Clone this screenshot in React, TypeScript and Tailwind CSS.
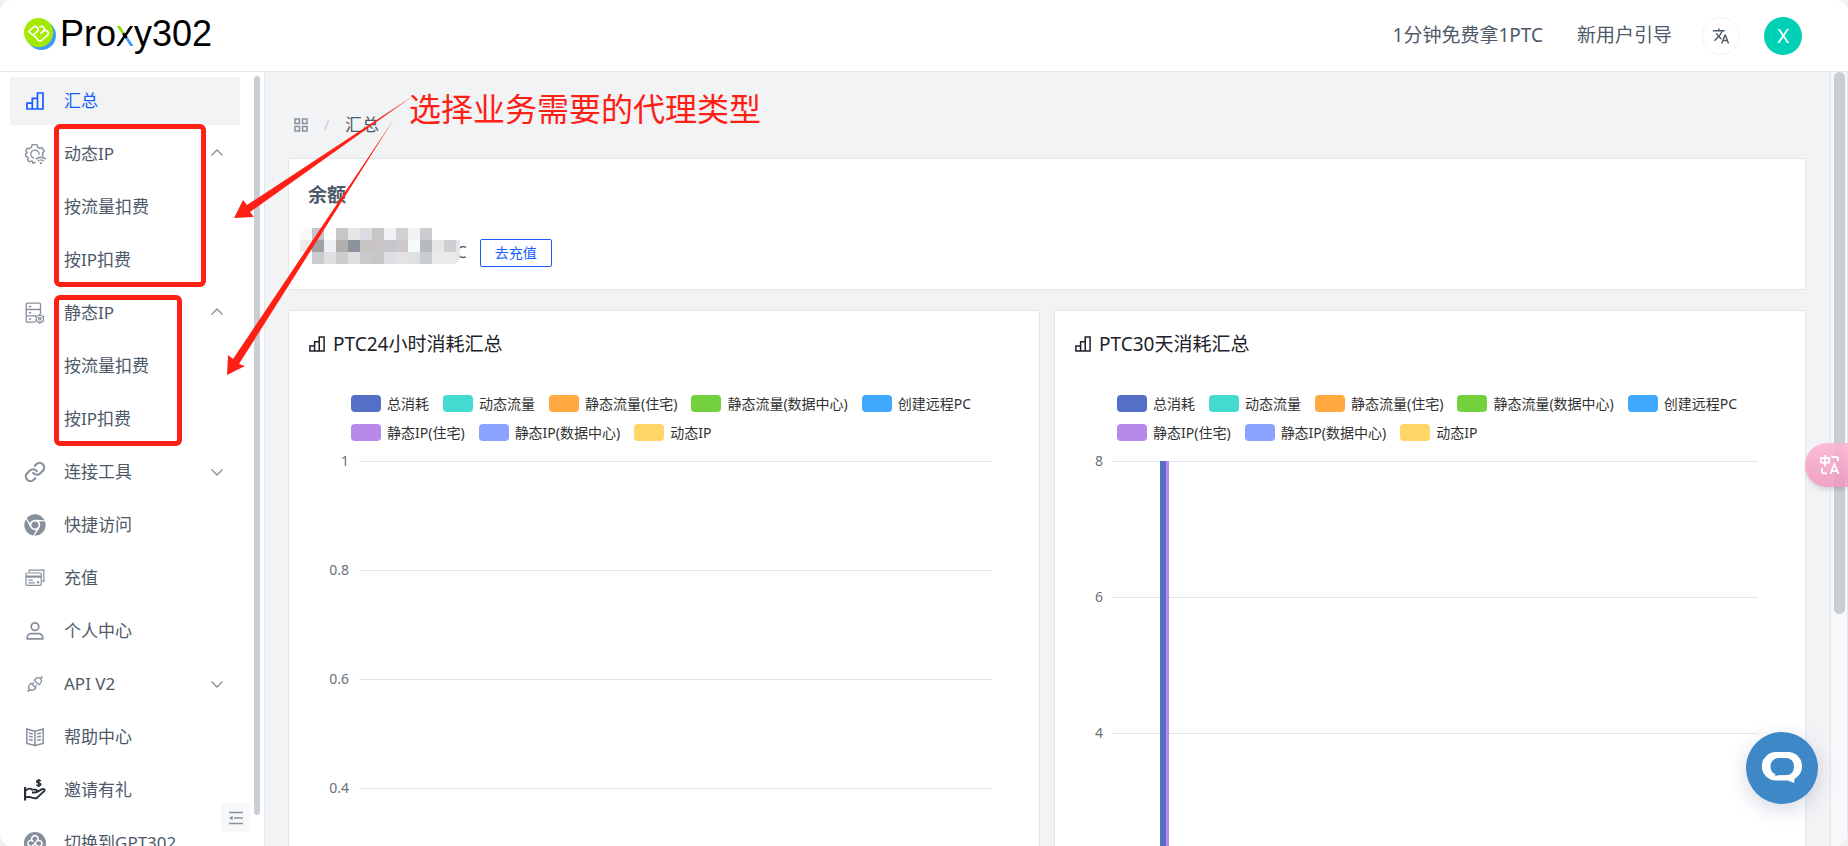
import React from "react";
import { AiOutlineApi } from "react-icons/ai";
import { FaChrome } from "react-icons/fa";
import { FiLink } from "react-icons/fi";
import { MdTranslate } from "react-icons/md";

interface IconProps {
  className?: string;
}

interface SubItem {
  label: string;
}

interface NavItem {
  label: string;
  icon: React.ReactNode;
  active?: boolean;
  expand?: "open" | "closed";
  items?: SubItem[];
}

interface Bar {
  key: string;
  className: string;
}

interface ChartCardProps {
  title: string;
  ticks: string[];
  rowClass: string;
  plotClass: string;
  bars?: Bar[];
}

const BarsIcon = ({ className }: IconProps) => (
  <svg className={className} viewBox="0 0 18 18" fill="none" stroke="currentColor" strokeWidth="1.7">
    <path d="M1 17V11.2h5.3V17M6.3 17V6.4h5.2M11.5 17V1H17v16M0.2 17h17.6" />
  </svg>
);

const GearWifiIcon = ({ className }: IconProps) => (
  <svg className={className} viewBox="0 0 22 22" fill="none" stroke="currentColor" strokeWidth="1.4">
    <path d="M11.5 19.2 9.2 20.4 7.9 17.9 5.4 18.8 3.6 16.9 4.2 14.3 1.6 13.2V10.9L3.2 9.6 1.8 7.7 3.2 5.2 5.6 5.5 7.6 4.2 8.2 1.6H13L13.7 4.2 15.7 5.4 18.2 4.8 20.2 8.2 18.5 10.2V12.4L19.6 13.2" strokeLinejoin="round" />
    <path d="M10 15.2A4.1 4.1 0 1 1 15 11.6" />
    <path d="M12 16.2a7 7 0 0 1 9.6 0M13.8 18.2a4.5 4.5 0 0 1 6 0" />
    <circle cx="16.8" cy="20.2" r="1.1" fill="currentColor" stroke="none" />
  </svg>
);

const ServerIcon = ({ className }: IconProps) => (
  <svg className={className} viewBox="0 0 22 22" fill="none" stroke="currentColor" strokeWidth="1.3">
    <path d="M16.5 12V2.2a1 1 0 0 0-1-1H3.2a1 1 0 0 0-1 1v17a1 1 0 0 0 1 1h8.3M2.2 7.5h14.3M2.2 13.8h9.8" />
    <path d="M4.8 4.5h2.4M4.8 10.7h2.4M4.8 17h2.4" strokeWidth="1.6" />
    <circle cx="15.8" cy="16.8" r="3.7" />
    <circle cx="15.8" cy="16.8" r="1.3" />
    <path d="M15.8 13.1v-1.3M15.8 21.7v-1.2M12.4 14.9l-1-.6M20.2 19.3l-1-.6M19.2 14.9l1-.6M11.4 19.3l1-.6" />
  </svg>
);

const CardsIcon = ({ className }: IconProps) => (
  <svg className={className} viewBox="0 0 22 22" fill="none" stroke="currentColor" strokeWidth="1.2">
    <path d="M5.2 5V3.2h14.6v11.2h-1.6" />
    <rect x="2" y="6" width="15.2" height="12.4" rx="1" />
    <path d="M2 9.6h15.2" strokeWidth="2.2" />
    <path d="M4.4 13.2h4.4M4.4 15.8h6.4" />
    <path d="M12.8 14.2h2.4v2h-2.4z" fill="currentColor" stroke="none" />
  </svg>
);

const UserIcon = ({ className }: IconProps) => (
  <svg className={className} viewBox="0 0 22 22" fill="none" stroke="currentColor" strokeWidth="1.7">
    <circle cx="11" cy="6.6" r="3.8" />
    <path d="M3.2 18.8v-1.3a3.8 3.8 0 0 1 3.8-3.8h8a3.8 3.8 0 0 1 3.8 3.8v1.3z" />
  </svg>
);

const BookIcon = ({ className }: IconProps) => (
  <svg className={className} viewBox="0 0 22 22" fill="none" stroke="currentColor" strokeWidth="1.5">
    <path d="M11 5.2 2.8 3v14.4L11 19.4l8.2-2V3zM11 5.2v14.2" />
    <path d="M5 7l3.8.9M5 10.2l3.8.9M5 13.4l3.8.9M17 7l-3.8.9M17 10.2l-3.8.9M17 13.4l-3.8.9" />
  </svg>
);

const GiftHandIcon = ({ className }: IconProps) => (
  <svg className={className} viewBox="0 0 22 22" fill="none" stroke="currentColor" strokeWidth="1.9">
    <path d="M1.1 8v13.6" strokeWidth="2.2" />
    <path d="M1.6 11.6C4.2 9 6.6 9.2 8 10.6h3.2c2.4 0 2.2 2.9 0 2.9H8M12.6 13.2l5.6-3c2-.9 3.2.6 1.8 2-2.3 2.2-4.7 4.7-7.3 6.8-2.6.9-5-.9-7.3-1.1-1.4 0-2.6 0-3.8.2" strokeLinejoin="round" />
    <path d="M16.8 2c-1.2-1-4.2-.9-4.2.7 0 1.7 4.2.8 4.2 2.5 0 1.6-3 1.7-4.4.6M14.7 0v8" strokeWidth="1.6" />
  </svg>
);

const KnotIcon = ({ className }: IconProps) => (
  <svg className={className} viewBox="0 0 22 22" fill="none">
    <circle cx="11" cy="11" r="11" fill="currentColor" />
    <g stroke="#fff" strokeWidth="1.5" strokeLinecap="round">
      <path d="M8.8 9.2A3.1 3.1 0 1 1 13.6 8.2L9 13.5" />
      <path d="M8.4 8.6A3 3 0 1 0 9 13.5" />
      <path d="M14 8.6a3 3 0 1 1-1.2 5L11 11.6" />
      <path d="M9 13.5a3 3 0 1 0 4.2 0" />
    </g>
  </svg>
);

const Chevron = ({ up }: { up: boolean }) => (
  <svg className="size-3.5 text-[#86909c]" viewBox="0 0 14 14" fill="none" stroke="currentColor" strokeWidth="1.3">
    <path d={up ? "M1.5 8.5 7 3l5.5 5.5" : "M1.5 4.5 7 10l5.5-5.5"} />
  </svg>
);

const LogoMark = () => (
  <svg className="h-8 w-8" viewBox="0 0 32 32" fill="none">
    <circle cx="17.4" cy="17.4" r="14.6" fill="#3d9bff" />
    <circle cx="14.6" cy="14.6" r="14.6" fill="#a4ea00" />
    <g stroke="#fff" strokeWidth="1.6" strokeLinecap="round" strokeLinejoin="round">
      <path d="M12 19.4 4.6 13.6 9.4 9.2c2.4-1.8 6 .8 4.2 4L9.2 17" />
      <path d="M15.8 8.8c2.8-1.3 5.4 1 4 3.9 3-1.1 5.8 1.7 4 4.3l-6.8 5.8c-1 .6-2 .3-2.8-.5L12 19.4M19.8 12.7l-3 2.6" />
    </g>
  </svg>
);

const navItems: NavItem[] = [
  { label: "汇总", icon: <BarsIcon className="size-[18px]" />, active: true },
  {
    label: "动态IP",
    icon: <GearWifiIcon className="size-[22px]" />,
    expand: "open",
    items: [{ label: "按流量扣费" }, { label: "按IP扣费" }],
  },
  {
    label: "静态IP",
    icon: <ServerIcon className="size-[22px]" />,
    expand: "open",
    items: [{ label: "按流量扣费" }, { label: "按IP扣费" }],
  },
  { label: "连接工具", icon: <FiLink className="size-[22px]" strokeWidth={2.4} />, expand: "closed" },
  { label: "快捷访问", icon: <FaChrome className="size-[22px]" /> },
  { label: "充值", icon: <CardsIcon className="size-[22px]" /> },
  { label: "个人中心", icon: <UserIcon className="size-[22px]" /> },
  { label: "API V2", icon: <AiOutlineApi className="size-5" />, expand: "closed" },
  { label: "帮助中心", icon: <BookIcon className="size-[22px]" /> },
  { label: "邀请有礼", icon: <GiftHandIcon className="size-[22px] text-[#272e3b]" /> },
  { label: "切换到GPT302", icon: <KnotIcon className="size-[22px]" /> },
];

const legend = [
  { name: "总消耗", color: "bg-[#5470c6]" },
  { name: "动态流量", color: "bg-[#45dad1]" },
  { name: "静态流量(住宅)", color: "bg-[#ffa940]" },
  { name: "静态流量(数据中心)", color: "bg-[#73d13d]" },
  { name: "创建远程PC", color: "bg-[#40a9ff]" },
  { name: "静态IP(住宅)", color: "bg-[#b888ea]" },
  { name: "静态IP(数据中心)", color: "bg-[#8ca2ff]" },
  { name: "动态IP", color: "bg-[#ffd666]" },
];

// blurred-out balance, one row of 12px cells per line
const mosaic = [
  ["bg-[#f9f8f6]", "bg-[#c4c4c8]", "bg-white", "bg-[#c8c6c8]", "bg-[#e6e6e6]", "bg-[#dcdde2]", "bg-[#c8c5c6]", "bg-[#f0f1f6]", "bg-[#d2cfd1]", "bg-[#f1f3f3]", "bg-[#cbccd1]"],
  ["bg-[#efebea]", "bg-[#a3a1a3]", "bg-[#edf0f6]", "bg-[#b3aeae]", "bg-[#8c919b]", "bg-[#c5c5c3]", "bg-[#c9c5c6]", "bg-[#c4c5cd]", "bg-[#cfc8cb]", "bg-[#f6faf8]", "bg-[#b9babf]", "bg-[#e6e6e6]", "bg-[#cfcfd3]", "bg-[#e6e6e6]"],
  ["bg-white", "bg-[#cacbd1]", "bg-[#dfdfdf]", "bg-[#cecccd]", "bg-[#dfdfe0]", "bg-[#c9c9cb]", "bg-[#c8c7c6]", "bg-[#dedfe4]", "bg-[#e5e2e4]", "bg-[#e0e0e4]", "bg-[#cbced1]", "bg-[#ebebeb]", "bg-[#e9eaed]", "bg-[#e9e7e6]"],
];

const Header = () => (
  <header className="flex h-18 shrink-0 items-center justify-between border-b border-[#e5e6eb] bg-white pr-[46px] pl-6">
    <a href="#" className="flex items-center gap-1 pb-1">
      <LogoMark />
      <span className="font-['Liberation_Sans'] text-4xl leading-10 text-black">
        Pro
        <span className="bg-[linear-gradient(135deg,#8ee000_0%,#8ee000_46%,#000_46%,#000_60%,#3d9bff_60%)] bg-clip-text text-transparent">
          x
        </span>
        y302
      </span>
    </a>
    <nav className="flex items-center text-[19px] text-[#4e5969]">
      <a href="#" className="mr-[34px]">1分钟免费拿1PTC</a>
      <a href="#" className="mr-[30px]">新用户引导</a>
      <button
        className="mr-6 flex size-[38px] items-center justify-center rounded-full border border-[#f2f3f5]"
        aria-label="语言"
      >
        <MdTranslate className="size-[18px]" />
      </button>
      <button className="size-[38px] rounded-full bg-[#00d0b6] text-xl text-white">X</button>
    </nav>
  </header>
);

const Sidebar = () => (
  <aside className="relative flex w-[265px] shrink-0 border-r border-[#e5e6eb] bg-white">
    <ul className="flex h-0 w-[250px] flex-col gap-[5px] px-2.5 pt-[5px] text-[17px] text-[#4e5969]">
      {navItems.map((item) => (
        <li key={item.label} className="flex flex-col gap-[5px]">
          <button
            className={
              item.active
                ? "flex h-12 w-full items-center rounded-xs bg-[#f2f3f5] px-3.5 text-left text-[#165dff]"
                : "flex h-12 w-full items-center rounded-xs px-3.5 text-left"
            }
          >
            <span
              className={
                item.active
                  ? "mr-[18px] flex w-[22px] justify-center"
                  : "mr-[18px] flex w-[22px] justify-center text-[#86909c]"
              }
            >
              {item.icon}
            </span>
            <span className="flex-1">{item.label}</span>
            {item.expand && (
              <span className="mr-0.5">
                <Chevron up={item.expand === "open"} />
              </span>
            )}
          </button>
          {item.items && (
            <ul className="flex flex-col gap-[5px]">
              {item.items.map((sub) => (
                <li key={sub.label}>
                  <button className="flex h-12 w-full items-center pl-[54px] text-left">{sub.label}</button>
                </li>
              ))}
            </ul>
          )}
        </li>
      ))}
    </ul>
    <div className="mt-1 mb-[31px] ml-1 w-1.5 rounded-full bg-[#c9cdd4]" />
    <button
      className="absolute right-3.5 bottom-3.5 flex size-[29px] items-center justify-center rounded-xs bg-[#f7f8fa] text-[#86909c]"
      aria-label="收起"
    >
      <svg className="size-3.5" viewBox="0 0 14 14" fill="none" stroke="currentColor" strokeWidth="1.4">
        <path d="M0 1.5h14M5 7h9M0 12.5h14" />
        <path d="M3.6 4.8v4.4L0 7z" fill="currentColor" stroke="none" />
      </svg>
    </button>
  </aside>
);

const Breadcrumb = () => (
  <nav className="flex h-[86px] items-center pt-5 pl-1.5 text-[17px] text-[#4e5969]">
    <svg className="size-3.5 text-[#86909c]" viewBox="0 0 14 14" fill="none" stroke="currentColor" strokeWidth="1.5">
      <path d="M1 1h4.5v4.5H1zM8.5 1H13v4.5H8.5zM1 8.5h4.5V13H1zM8.5 8.5H13V13H8.5z" />
    </svg>
    <span className="w-[37px] text-center text-sm text-[#c9cdd4]">/</span>
    <span>汇总</span>
  </nav>
);

const BalanceCard = () => (
  <section className="h-[132px] rounded-xs border border-[#e5e6eb] bg-white px-[19px] pt-[22px]">
    <h2 className="text-[19px] leading-7 font-bold text-[#4e5969]">余额</h2>
    <div className="mt-[19px] flex items-start">
      <div className="z-10 -ml-2 w-40 overflow-hidden rounded-lg">
        {mosaic.map((row, i) => (
          <div key={i} className="flex h-3">
            {row.map((cell, j) => (
              <span key={j} className={`w-3 shrink-0 ${cell}`} />
            ))}
          </div>
        ))}
      </div>
      <span className="-ml-1 pt-3 text-[17px] leading-6 text-[#4e5969]">C</span>
      <button className="mt-[11px] ml-[13px] h-7 w-18 rounded-xs border border-[#165dff] text-sm text-[#165dff]">
        去充值
      </button>
    </div>
  </section>
);

const ChartCard = ({ title, ticks, rowClass, plotClass, bars = [] }: ChartCardProps) => (
  <section className="h-[640px] flex-1 overflow-hidden rounded-xs border border-[#e5e6eb] bg-white">
    <h2 className="flex items-center gap-2 pt-[19px] pl-5 text-[19px] leading-7 text-[#1d2129]">
      <BarsIcon className="size-4" />
      {title}
    </h2>
    <ul className="mt-[37px] ml-[62px] flex flex-wrap gap-x-3.5 gap-y-3 text-sm text-[#333]">
      {legend.map((item) => (
        <li key={item.name} className="flex h-[17px] items-center gap-1.5">
          <span className={`h-[17px] w-[30px] rounded ${item.color}`} />
          {item.name}
        </li>
      ))}
    </ul>
    <div className={`relative mt-2.5 ${plotClass}`}>
      {ticks.map((tick) => (
        <div key={tick} className={rowClass}>
          <div className="flex h-5 items-center gap-2.5">
            <span className="w-[60px] text-right text-sm text-[#6e7079]">{tick}</span>
            <span className="h-px flex-1 bg-[#e0e6f1]" />
          </div>
        </div>
      ))}
      <div className="absolute inset-y-0 top-2.5 left-[117px] flex">
        {bars.map((bar) => (
          <span key={bar.key} className={bar.className} />
        ))}
      </div>
    </div>
  </section>
);

const Annotations = () => (
  <div className="pointer-events-none absolute inset-0 z-20">
    <div className="absolute top-[124px] left-[54px] h-[163px] w-[152px] rounded-md border-5 border-[#ff2015]" />
    <div className="absolute top-[295px] left-[54px] h-[151px] w-[128px] rounded-md border-5 border-[#ff2015]" />
    <svg className="absolute top-0 left-0" width="480" height="400" fill="#ff2015">
      <path d="M413 96 247 205 243 200 234 218 254 217 250 212z" />
      <path d="M394 119 233 359 228 355 227 375 245 366 239 364z" />
    </svg>
    <p className="absolute top-[86px] left-[409px] text-[32px] leading-[46px] text-[#ff2015]">
      选择业务需要的代理类型
    </p>
  </div>
);

const FloatingButtons = () => (
  <>
    <button
      className="absolute top-[443px] right-0 h-11 w-[43px] rounded-l-full bg-linear-to-b from-[#fdb5d2]/90 to-[#ee94bc]/85 pl-[15px] text-white shadow-md"
      aria-label="翻译"
    >
      <svg className="size-5" viewBox="0 0 20 20" fill="none" stroke="currentColor" strokeWidth="1.8">
        <path d="M1 3h8v4.6H1zM5 0v11.5M11.5 2H16a2 2 0 0 1 2 2v2M2 13v3a2.4 2.4 0 0 0 2.4 2.4H7" />
        <path d="M10.4 19 14.4 9l4.2 10M11.8 15.8h5.4" />
      </svg>
    </button>
    <button
      className="absolute right-[30px] bottom-[42px] flex size-18 items-center justify-center rounded-full bg-[#3f88c8] shadow-[0_6px_20px_rgba(60,70,130,0.2)]"
      aria-label="客服"
    >
      <svg className="h-8 w-10" viewBox="0 0 40 32" fill="none">
        <path
          d="M14 0h12a14 14 0 0 1 14 14c0 6-3 10-7.5 13L32 31 26 28.5H14A14 14 0 0 1 14 0z"
          fill="#fff"
        />
        <path
          d="M16 6h8a8 8 0 0 1 8 8c0 5-2 8-6 9l-10 .2-3 1 .6-1.8C10 21 8.5 18 8.5 14A8 8 0 0 1 16 6z"
          fill="#3f88c8"
        />
      </svg>
    </button>
  </>
);

const ticksDay = ["1", "0.8", "0.6", "0.4"];
const ticksMonth = ["8", "6", "4"];

const App = () => {
  return (
    <div className="h-screen bg-[#f0f0f0] font-['Noto_Sans','Noto_Sans_CJK_SC',sans-serif]">
      <div className="relative flex h-full flex-col overflow-hidden rounded-xl bg-[#f2f3f5]">
        <Header />
        <div className="flex min-h-0 flex-1">
          <Sidebar />
          <main className="min-w-0 flex-1 overflow-hidden pr-6 pl-[23px]">
            <Breadcrumb />
            <BalanceCard />
            <div className="mt-5 flex gap-3.5">
              <ChartCard
                title="PTC24小时消耗汇总"
                ticks={ticksDay}
                rowClass="h-[109px]"
                plotClass="mr-[47px]"
              />
              <ChartCard
                title="PTC30天消耗汇总"
                ticks={ticksMonth}
                rowClass="h-[136px]"
                plotClass="-ml-3 mr-[47px]"
                bars={[
                  { key: "total", className: "w-1.5 bg-[#5470c6]" },
                  { key: "static", className: "w-[3px] bg-[#b888ea]" },
                ]}
              />
            </div>
          </main>
          <div className="flex w-[18px] shrink-0 justify-center border-x border-[#e5e6eb] bg-[#f7f8fa]">
            <div className="h-[70%] w-[11px] rounded-full bg-[#c9cdd4]" />
          </div>
        </div>
        <FloatingButtons />
        <Annotations />
      </div>
    </div>
  );
};

export default App;
